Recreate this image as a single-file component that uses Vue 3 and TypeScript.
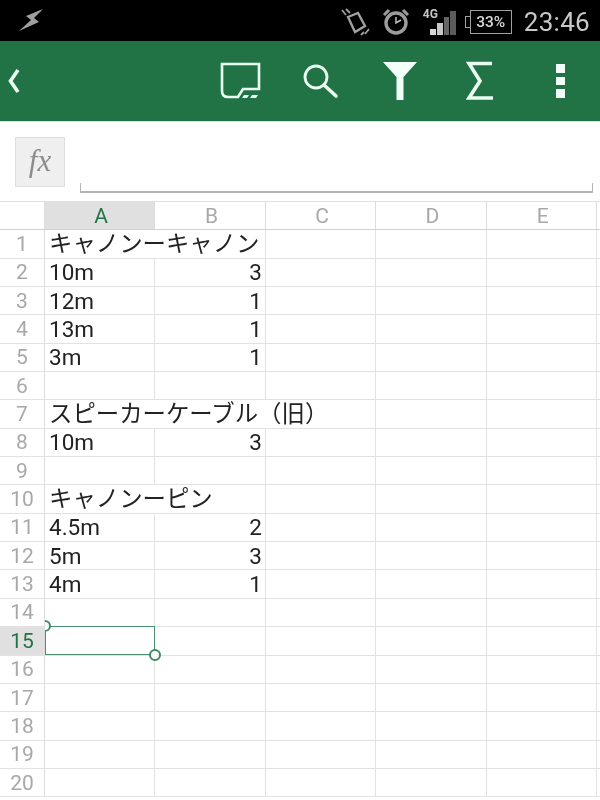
<script setup lang="ts">
interface Row {
  a?: string;
  b?: string;
  spill?: number;
}

const columns = ['A', 'B', 'C', 'D', 'E'];

const rows: Row[] = [
  { a: 'キャノンーキャノン', spill: 1 },
  { a: '10m', b: '3' },
  { a: '12m', b: '1' },
  { a: '13m', b: '1' },
  { a: '3m', b: '1' },
  {},
  { a: 'スピーカーケーブル（旧）', spill: 2 },
  { a: '10m', b: '3' },
  {},
  { a: 'キャノンーピン', spill: 1 },
  { a: '4.5m', b: '2' },
  { a: '5m', b: '3' },
  { a: '4m', b: '1' },
  {},
  {},
  {},
  {},
  {},
  {},
  {},
];

const activeRow = 15;
</script>

<template>
  <div class="phone">
    <div class="status-bar">
      <svg class="bolt" width="26" height="24" viewBox="0 0 26 24">
        <path d="M25 1 L8 8 L13 12 L1 23 L21 14 L16 10 Z" fill="#a0a0a0" />
      </svg>
      <div class="status-right">
        <svg class="st-rotate" width="30" height="28" viewBox="0 0 30 28" fill="none" stroke="#a0a0a0" stroke-width="1.8">
          <path d="M8 9 L18 5 L25 18 L15 24 Z" stroke-width="2.4" />
          <path d="M2 2 L6 7 M6 1 L10 5 M21 27 L24 24 M25 26 L29 21" />
        </svg>
        <svg class="st-alarm" width="28" height="28" viewBox="0 0 28 28" fill="none" stroke="#9c9c9c">
          <circle cx="14" cy="15" r="10" stroke-width="3.4" />
          <path d="M14 9 V15 L19 12" stroke-width="1.5" stroke="#c0c0c0" />
          <path d="M2 7 L7 2 M21 2 L26 7" stroke-width="3" />
        </svg>
        <div class="st-signal">
          <span class="st-4g">4G</span>
          <svg width="28" height="28" viewBox="0 0 28 28">
            <rect x="1" y="21" width="6" height="6" fill="#d8d8d8" />
            <rect x="8" y="15" width="6" height="12" fill="#c8c8c8" />
            <rect x="15" y="9" width="5" height="18" fill="#666" />
            <rect x="21" y="3" width="6" height="24" fill="#5c5c5c" />
          </svg>
        </div>
        <div class="st-battery"><span>33%</span></div>
        <span class="st-time">23:46</span>
      </div>
    </div>

    <div class="app-bar">
      <button class="back">
        <svg width="14" height="26" viewBox="0 0 14 26" fill="none" stroke="#eafff2" stroke-width="3.6">
          <path d="M11 2 L3.5 13 L11 24" />
        </svg>
      </button>
      <div class="actions">
        <button>
          <svg width="42" height="38" viewBox="0 0 42 38" fill="none" stroke="#eafff2" stroke-width="2.6">
            <path d="M3 2 H40 V27 H24 L19 35 H9 Q3 35 3 29 Z" />
            <path d="M23 36 L25 33 H30 L28 36 Z M31 36 L33 33 H39 L37 36 Z" fill="#eafff2" stroke="none" />
          </svg>
        </button>
        <button>
          <svg width="38" height="38" viewBox="0 0 38 38" fill="none" stroke="#eafff2">
            <circle cx="15" cy="15" r="11" stroke-width="2.8" />
            <path d="M23 23 L35 34" stroke-width="3.6" stroke-linecap="round" />
          </svg>
        </button>
        <button>
          <svg width="36" height="40" viewBox="0 0 36 40">
            <path d="M1 1 H35 L21.5 16 V39 H14.5 V16 Z" fill="#f2fff8" />
          </svg>
        </button>
        <button>
          <svg width="28" height="40" viewBox="0 0 28 40" fill="none" stroke="#eafff2" stroke-width="3.6">
            <path d="M26 2.5 H3 L14 20 L3 37 H27" />
          </svg>
        </button>
        <button>
          <span class="dots"><i></i><i></i><i></i></span>
        </button>
      </div>
    </div>

    <div class="formula-bar">
      <div class="fx">fx</div>
      <div class="formula-input"></div>
    </div>

    <div class="sheet">
      <div class="sheet-row head-row">
        <div class="row-head"></div>
        <div v-for="c in columns" :key="c" class="col-head" :class="{ active: c === 'A' }">{{ c }}</div>
      </div>
      <div v-for="(row, i) in rows" :key="i" class="sheet-row">
        <div class="row-head" :class="{ active: i + 1 === activeRow }">{{ i + 1 }}</div>
        <div class="cell text" :class="{ open: row.spill }">
          <span v-if="row.a">{{ row.a }}</span>
        </div>
        <div class="cell num" :class="{ open: row.spill === 2 }">{{ row.b }}</div>
        <div class="cell"></div>
        <div class="cell"></div>
        <div class="cell"></div>
      </div>
      <div class="selection">
        <span class="handle tl"></span>
        <span class="handle br"></span>
      </div>
    </div>
  </div>
</template>

<style>
html,
body {
  background: #fff;
  overflow: hidden;
}
</style>

<style scoped>
.phone {
  width: 600px;
  height: 800px;
  overflow: hidden;
  background: #fff;
  font-family: Roboto, 'Noto Sans CJK JP', sans-serif;
  filter: blur(0.5px);
}

.status-bar {
  height: 41px;
  background: #000;
  display: flex;
  align-items: center;
  justify-content: space-between;
  padding: 2px 10px 0 18px;
  box-sizing: border-box;
}

.bolt {
  margin-top: -3px;
}

.status-right {
  display: flex;
  align-items: center;
}

.st-rotate {
  margin-right: 12px;
}

.st-alarm {
  margin-right: 14px;
}

.st-signal {
  position: relative;
  width: 33px;
  height: 28px;
  display: flex;
  justify-content: flex-end;
  margin-right: 8px;
}

.st-4g {
  position: absolute;
  left: -1px;
  top: -1px;
  font-size: 12px;
  font-weight: 700;
  color: #c4c4c4;
}

.st-battery {
  position: relative;
  width: 40px;
  height: 22px;
  border: 1px solid #a0a0a0;
  margin-left: 5px;
  margin-right: 12px;
  display: flex;
  align-items: center;
  justify-content: center;
}

.st-battery::before {
  content: '';
  position: absolute;
  left: -6px;
  top: 5px;
  width: 4px;
  height: 10px;
  border: 1px solid #a0a0a0;
  border-right: none;
}

.st-battery span {
  font-size: 15.5px;
  font-weight: 500;
  color: #d8d8d8;
}

.st-time {
  font-size: 26px;
  color: #c8c8c8;
  letter-spacing: 0.3px;
}

.app-bar {
  height: 81px;
  box-sizing: border-box;
  background: #217346;
  border-bottom: 1px solid #c4ecd4;
  display: flex;
  align-items: center;
  justify-content: space-between;
}

button {
  border: none;
  background: none;
  padding: 0;
  display: flex;
  align-items: center;
  justify-content: center;
}

.back {
  width: 28px;
  height: 80px;
}

.actions {
  display: flex;
}

.actions button {
  width: 80px;
  height: 80px;
}

.dots {
  display: flex;
  flex-direction: column;
  gap: 4px;
}

.dots i {
  display: block;
  width: 9px;
  height: 8.5px;
  background: #f2fff8;
}

.formula-bar {
  height: 80px;
  display: flex;
  padding: 15px 7px 0 15px;
  box-sizing: border-box;
  border-bottom: 1px solid #e0e0e0;
}

.fx {
  width: 50px;
  height: 50px;
  box-sizing: border-box;
  background: #efefef;
  border: 1px solid #dedede;
  font-family: 'Liberation Serif', serif;
  font-style: italic;
  font-size: 31px;
  line-height: 46px;
  text-align: center;
  color: #8c8c8c;
}

.formula-input {
  flex: 1;
  height: 54px;
  margin-left: 15px;
  border: 1px solid #b4b4b4;
  border-width: 0 1px 2px 1px;
  clip-path: inset(46px 0 0 0);
}

.sheet {
  position: relative;
}

.sheet-row {
  display: grid;
  grid-template-columns: 45px repeat(5, 110.4px);
  grid-template-rows: 100%;
  height: 28.35px;
  box-sizing: border-box;
  border-bottom: 1px solid #e2e2e2;
}

.head-row {
  border-bottom: 1px solid #cfcfcf;
}

.row-head,
.col-head {
  display: flex;
  align-items: center;
  justify-content: center;
  font-size: 21px;
  line-height: 24px;
  color: #a8a8a8;
  box-sizing: border-box;
  border-right: 1px solid #dcdcdc;
}

.col-head {
  padding-left: 3px;
}

.row-head.active,
.col-head.active {
  background: #e0e0e0;
  color: #217346;
}

.cell {
  display: flex;
  align-items: center;
  min-width: 0;
  box-sizing: border-box;
  border-right: 1px solid #e2e2e2;
  font-size: 22.5px;
  line-height: 24px;
  color: #222;
  white-space: nowrap;
}

.cell.open {
  border-right-color: transparent;
}

.text {
  padding-left: 4px;
}

.text span {
  position: relative;
  z-index: 1;
}

.text.open {
  font-size: 23.4px;
}

.num {
  justify-content: flex-end;
  padding-right: 3px;
}

.selection {
  position: absolute;
  left: 45px;
  top: 423.5px;
  width: 110px;
  height: 29.5px;
  box-sizing: border-box;
  border: 1.5px solid #4a9070;
  z-index: 2;
}

.handle {
  position: absolute;
  width: 12px;
  height: 12px;
  box-sizing: border-box;
  border-radius: 50%;
  border: 2px solid #3f8a62;
  background: #fff;
}

.handle.tl {
  left: -7px;
  top: -7px;
  clip-path: inset(0 0 0 6px);
}

.handle.br {
  right: -7px;
  bottom: -7px;
}
</style>
